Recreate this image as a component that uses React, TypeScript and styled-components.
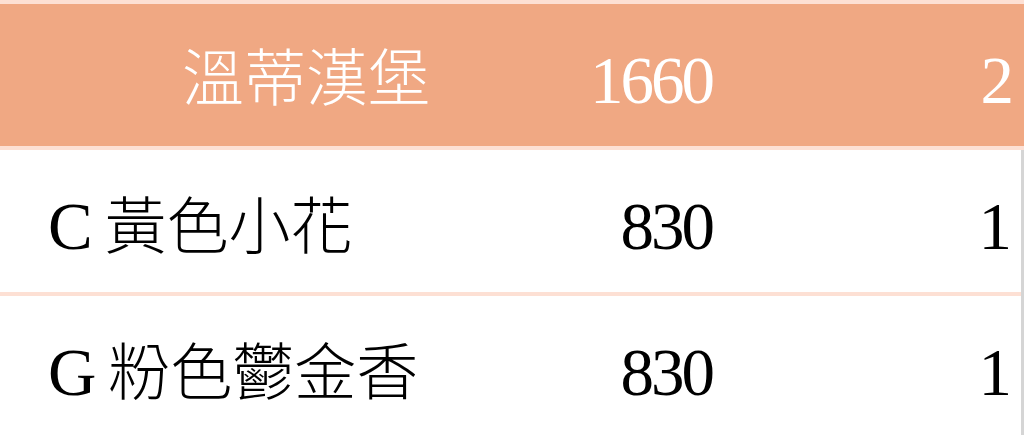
import React from "react";
import styled, { createGlobalStyle } from "styled-components";

const Global = createGlobalStyle`
  html, body { margin: 0; padding: 0; background: #ffffff; }
  body { overflow: hidden; }
`;

const Table = styled.div`
  width: 1024px;
  border-top: 4px solid #fde0d4;
  font-family: "Liberation Serif", "Noto Sans CJK TC", serif;
  font-size: 62px;
  font-weight: 300;
`;

const HeaderRow = styled.div`
  display: grid;
  grid-template-columns: 480px 280px 1fr;
  height: 142px;
  background: #f0a883;
  color: #ffffff;
  border-bottom: 4px solid #fde0d4;
`;

const Body = styled.div`
  border-right: 3px solid #d5d5d5;
`;

const Row = styled.div`
  display: grid;
  grid-template-columns: 480px 280px 1fr;
  height: 142px;
  background: #ffffff;
  color: #000000;
  border-bottom: 4px solid #fde0d4;
`;

const Cell = styled.div<{ $align: "left" | "right"; $pl?: number; $pr?: number }>`
  display: flex;
  align-items: center;
  justify-content: ${(p) => (p.$align === "left" ? "flex-start" : "flex-end")};
  padding-left: ${(p) => p.$pl ?? 0}px;
  padding-right: ${(p) => p.$pr ?? 0}px;
  padding-top: 10px;
  white-space: pre;
  line-height: 1;
`;

const Text = styled.span`
  display: inline-block;
`;

const Latin = styled.span<{ $gap?: number }>`
  font-size: 67px;
  letter-spacing: -3px;
  margin-right: ${(p) => p.$gap ?? 3}px;
`;

const rows = [
  { code: "C", name: "黃色小花", price: "830", qty: "1" },
  { code: "G", name: "粉色鬱金香", price: "830", qty: "1" },
];

export default function App() {
  return (
    <>
      <Global />
      <Table>
        <HeaderRow>
          <Cell $align="right" $pr={50}><Text>溫蒂漢堡</Text></Cell>
          <Cell $align="right" $pr={45}><Text><Latin>1660</Latin></Text></Cell>
          <Cell $align="right" $pr={10}><Text><Latin>2</Latin></Text></Cell>
        </HeaderRow>
        <Body>
          {rows.map((r) => (
            <Row key={r.name}>
              <Cell $align="left" $pl={48}>
                <Text><Latin $gap={1}>{r.code + " "}</Latin>{r.name}</Text>
              </Cell>
              <Cell $align="right" $pr={45}><Text><Latin>{r.price}</Latin></Text></Cell>
              <Cell $align="right" $pr={9}><Text><Latin>{r.qty}</Latin></Text></Cell>
            </Row>
          ))}
        </Body>
      </Table>
    </>
  );
}
